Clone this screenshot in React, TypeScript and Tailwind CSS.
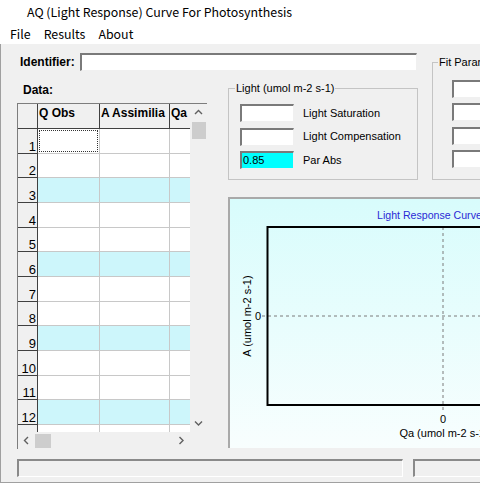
import React from "react";

const ui = { fontFamily: '"Liberation Sans", Arial, sans-serif' };
const cjk = { fontFamily: '"Noto Sans CJK SC", "Liberation Sans", sans-serif' };

function TextBox({ value, className = "" }: { value?: string; className?: string }) {
  return (
    <div
      className={`h-[18px] shrink-0 border-t-2 border-l-2 border-t-[#7a7a7a] border-l-[#7a7a7a] border-r border-b border-r-[#f0f0f0] border-b-[#f0f0f0] text-[11px] leading-[14px] pl-[1px] ${className}`}
    >
      {value}
    </div>
  );
}

function Chevron({ dir }: { dir: "up" | "down" | "left" | "right" }) {
  const d = {
    up: "M1 5 L4.5 1.5 L8 5",
    down: "M1 1.5 L4.5 5 L8 1.5",
    left: "M5 1 L1.5 4.5 L5 8",
    right: "M1.5 1 L5 4.5 L1.5 8",
  }[dir];
  const vertical = dir === "up" || dir === "down";
  return (
    <svg width={vertical ? 9 : 7} height={vertical ? 7 : 9} viewBox={vertical ? "0 0 9 7" : "0 0 7 9"}>
      <path d={d} fill="none" stroke="#606060" strokeWidth="1.4" />
    </svg>
  );
}

const rows = Array.from({ length: 12 }, (_, i) => i + 1);

function DataGrid() {
  return (
    <div className="flex-1 flex flex-col border-t border-l border-[#7d7d7d] bg-[#f0f0f0] overflow-hidden">
      <div className="flex flex-1 min-h-0">
        <div className="flex-1 overflow-hidden flex flex-col">
          <div className="flex h-[25px] shrink-0 border-b border-[#404040] font-bold text-[12px] leading-[14px] whitespace-nowrap">
            <div className="w-[20px] shrink-0 border-r border-[#404040]" />
            <div className="w-[62px] shrink-0 border-r border-[#404040] pl-[1px] pt-[2px] overflow-hidden">Q Obs</div>
            <div className="w-[70px] shrink-0 border-r border-[#404040] pl-[1px] pt-[2px] overflow-hidden">A Assimilia</div>
            <div className="w-[60px] shrink-0 pl-[1px] pt-[2px] overflow-hidden">Qa</div>
          </div>
          {rows.map((n) => {
            const tint = n % 3 === 0 ? "bg-[#cdf6fb]" : "bg-white";
            return (
              <div key={n} className="flex h-[24.67px] shrink-0">
                <div className="w-[20px] shrink-0 border-r border-b border-[#404040] bg-[#f0f0f0] flex items-end justify-end pr-[1px] text-[13px] leading-[13px]">
                  {n}
                </div>
                <div className={`w-[62px] shrink-0 border-r border-b border-[#c8c8c8] ${tint}`}>
                  {n === 1 && <div className="m-[1px] h-[calc(100%-2px)] border border-dotted border-[#333]" />}
                </div>
                <div className={`w-[70px] shrink-0 border-r border-b border-[#c8c8c8] ${tint}`} />
                <div className={`w-[60px] shrink-0 border-b border-[#c8c8c8] ${tint}`} />
              </div>
            );
          })}
          <div className="flex flex-1">
            <div className="w-[20px] shrink-0 border-r border-[#404040] bg-[#f0f0f0]" />
            <div className="w-[62px] shrink-0 border-r border-[#c8c8c8] bg-white" />
            <div className="w-[70px] shrink-0 border-r border-[#c8c8c8] bg-white" />
            <div className="w-[60px] shrink-0 bg-white" />
          </div>
        </div>
        <div className="w-[17px] shrink-0 flex flex-col items-center bg-[#f0f0f0]">
          <div className="h-[17px] flex items-center justify-center">
            <Chevron dir="up" />
          </div>
          <div className="w-[14px] h-[17px] bg-[#cdcdcd] mt-[1px]" />
          <div className="flex-1" />
          <div className="h-[17px] flex items-center justify-center">
            <Chevron dir="down" />
          </div>
        </div>
      </div>
      <div className="flex h-[17px] shrink-0">
        <div className="flex-1 flex items-center bg-[#f0f0f0]">
          <div className="w-[17px] flex justify-center">
            <Chevron dir="left" />
          </div>
          <div className="w-[16px] h-[14px] bg-[#cdcdcd]" />
          <div className="flex-1" />
          <div className="w-[17px] flex justify-center">
            <Chevron dir="right" />
          </div>
        </div>
        <div className="w-[17px] bg-[#f0f0f0]" />
      </div>
    </div>
  );
}

function Chart() {
  return (
    <div className="w-[270px] shrink-0 mt-[17px] mb-[1px] border-t-2 border-l-2 border-[#a9a9a9] bg-linear-to-b from-[#d8fcfc] to-[#f8fefe]">
      <svg width="268" height="249" style={ui}>
        <text x="147" y="20" fontSize="10.6" fill="#2a2ad6">
          Light Response Curve
        </text>
        <path d="M32 117 H268 M213 28 V212" stroke="#7a7a7a" strokeWidth="1" strokeDasharray="3 3" fill="none" />
        <path d="M268 28 H37.5 V206 H268" stroke="#000" strokeWidth="2" fill="none" />
        <text x="31" y="121" fontSize="11" textAnchor="end" fill="#000">
          0
        </text>
        <text x="213" y="224" fontSize="11" textAnchor="middle" fill="#000">
          0
        </text>
        <text x="214" y="238" fontSize="11" textAnchor="middle" fill="#000">
          Qa (umol m-2 s-1)
        </text>
        <text transform="translate(21,117) rotate(-90)" fontSize="11" textAnchor="middle" fill="#000">
          A (umol m-2 s-1)
        </text>
      </svg>
    </div>
  );
}

export default function App() {
  return (
    <div className="w-[480px] h-[489px] overflow-hidden bg-white text-black" style={ui}>
      <div className="h-[24px] flex items-center pl-[27px] text-[12.4px] whitespace-nowrap" style={cjk}>
        AQ (Light Response) Curve For Photosynthesis
      </div>
      <div className="h-[20px] flex items-center pl-[10px] gap-[13px] text-[12.4px]" style={cjk}>
        <span>File</span>
        <span>Results</span>
        <span>About</span>
      </div>
      <div className="h-[439px] bg-[#f0f0f0] border-l border-b border-[#a0a0a0] flex flex-col">
        <div className="grid grid-cols-[16px_190px_21px_190px_14px_48px] grid-rows-[32px_104px_269px]">
          <div className="col-start-1 col-span-5 row-start-1 flex items-center pl-[19px] pt-[9px] self-start">
            <div className="w-[60px] shrink-0 font-bold text-[12px]">Identifier:</div>
            <TextBox className="w-[337px] bg-white" />
          </div>

          <fieldset className="col-start-6 row-start-1 row-span-2 mt-[12px] w-[60px] border border-[#c4c4c4]">
            <legend className="ml-[5px] px-[1px] text-[11px] leading-[13px] whitespace-nowrap">Fit Parameters</legend>
            <div className="flex flex-col gap-[5.3px] pl-[19px] pt-[11px]">
              <TextBox className="w-[40px] bg-white" />
              <TextBox className="w-[40px] bg-white" />
              <TextBox className="w-[40px] bg-white" />
              <TextBox className="w-[40px] bg-white" />
            </div>
          </fieldset>

          <div className="col-start-2 row-start-2 row-span-2 flex flex-col">
            <div className="mt-[7px] pl-[6px] font-bold text-[12px] leading-[14px]">Data:</div>
            <div className="mt-[6px] flex-1 flex flex-col">
              <DataGrid />
            </div>
          </div>

          <fieldset className="col-start-4 row-start-2 mt-[5.5px] border border-[#c4c4c4]">
            <legend className="ml-[6px] px-[1px] text-[11px] leading-[13px]">Light (umol m-2 s-1)</legend>
            <div className="flex flex-col gap-[5.5px] pl-[11px] pt-[9.5px] text-[11px]">
              {[
                ["", "Light Saturation", "bg-white"],
                ["", "Light Compensation", "bg-white"],
                ["0.85", "Par Abs", "bg-[#00ffff]"],
              ].map(([v, label, bg]) => (
                <div key={label} className="flex items-center">
                  <TextBox value={v} className={`w-[54px] ${bg}`} />
                  <span className="ml-[9px]">{label}</span>
                </div>
              ))}
            </div>
          </fieldset>

          <div className="col-start-4 col-span-3 row-start-3 flex">
            <Chart />
          </div>
        </div>

        <div className="flex pl-[16px] mt-[10px] gap-[10px]">
          <div className="w-[386px] h-[18px] shrink-0 border-t-2 border-l-2 border-t-[#8a8a8a] border-l-[#8a8a8a] border-r border-b border-r-white border-b-white" />
          <div className="w-[80px] h-[18px] shrink-0 border-t-2 border-l-2 border-t-[#8a8a8a] border-l-[#8a8a8a] border-r border-b border-r-white border-b-white" />
        </div>
      </div>
    </div>
  );
}
